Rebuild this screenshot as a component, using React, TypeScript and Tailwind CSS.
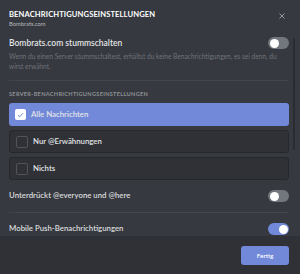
import React, { useState } from 'react';

const font = { fontFamily: 'Lato, "Open Sans", sans-serif' };

const Toggle: React.FC<{ on: boolean; onClick: () => void }> = ({ on, onClick }) => (
    <button
        type="button"
        onClick={onClick}
        className={`relative w-[21px] h-[12px] rounded-full shrink-0 ${on ? 'bg-[#7289da]' : 'bg-[#72767d]'}`}
    >
        <span
            className={`absolute top-[1.5px] w-[9px] h-[9px] rounded-full bg-white ${on ? 'right-[1.5px]' : 'left-[1.5px]'}`}
        />
    </button>
);

const options = ['Alle Nachrichten', 'Nur @Erwähnungen', 'Nichts'];

const App: React.FC = () => {
    const [muted, setMuted] = useState(false);
    const [level, setLevel] = useState(0);
    const [suppress, setSuppress] = useState(false);
    const [push, setPush] = useState(true);

    return (
        <div style={font} className="relative w-[300px] h-[274px] bg-[#36393f] flex flex-col overflow-hidden">
            {/* scrollbar */}
            <div className="absolute right-[5px] top-[38px] w-[2px] h-[112px] rounded-full bg-[#2a2c31]" />

            <div className="flex-1 px-[9px] pr-[11px] overflow-hidden">
                <div className="pt-[10px] h-[34px] relative">
                    <div className="text-[7.6px] leading-[9px] font-bold text-white tracking-[0.1px]">BENACHRICHTIGUNGSEINSTELLUNGEN</div>
                    <div className="text-[5.8px] leading-[8px] text-[#b9bbbe] mt-[1px]">Bombrats.com</div>
                    <button className="absolute right-[4px] top-[13px] text-[#a0a3a8]">
                        <svg width="6" height="6" viewBox="0 0 6 6">
                            <path d="M0.5 0.5 L5.5 5.5 M5.5 0.5 L0.5 5.5" stroke="currentColor" strokeWidth="0.9" />
                        </svg>
                    </button>
                </div>

                <div className="mt-[2px] h-[14px] flex items-center justify-between">
                    <span className="text-[8.5px] font-semibold text-[#e3e4e6]">Bombrats.com stummschalten</span>
                    <Toggle on={muted} onClick={() => setMuted(!muted)} />
                </div>
                <p className="mt-[1px] text-[6.6px] leading-[10px] text-[#6f737a]">
                    Wenn du einen Server stummschaltest, erhältst du keine Benachrichtigungen, es sei denn, du wirst erwähnt.
                </p>

                <div className="mt-[9px] h-px bg-[#42454a]" />

                <div className="mt-[8px] h-[11px] flex items-center text-[5.6px] font-bold tracking-[0.3px] text-[#8e9297]">
                    SERVER-BENACHRICHTIGUNGSEINSTELLUNGEN
                </div>

                <div className="mt-[3px] flex flex-col gap-[4px]">
                    {options.map((opt, i) => {
                        const active = level === i;
                        return (
                            <button
                                key={opt}
                                type="button"
                                onClick={() => setLevel(i)}
                                className={`h-[23px] rounded-[3px] flex items-center pl-[6px] gap-[5px] ${active ? 'bg-[#7289da]' : 'bg-[#2f3136] border border-[#26282c] pl-[5px]'}`}
                            >
                                {active ? (
                                    <span className="w-[11px] h-[11px] rounded-[2px] bg-white flex items-center justify-center">
                                        <svg width="7" height="6" viewBox="0 0 7 6">
                                            <path d="M1 3.2 L2.7 4.8 L6 1.2" fill="none" stroke="#7289da" strokeWidth="1" />
                                        </svg>
                                    </span>
                                ) : (
                                    <span className="w-[12px] h-[12px] rounded-[2px] border border-[#4f535a]" />
                                )}
                                <span className="text-[7.8px] font-semibold text-[#e3e4e6]">{opt}</span>
                            </button>
                        );
                    })}
                </div>

                <div className="mt-[9px] h-[14px] flex items-center justify-between">
                    <span className="text-[7.8px] font-semibold text-[#dcddde]">Unterdrückt @everyone und @here</span>
                    <Toggle on={suppress} onClick={() => setSuppress(!suppress)} />
                </div>

                <div className="mt-[9px] h-px bg-[#42454a]" />

                <div className="mt-[9px] h-[14px] flex items-center justify-between">
                    <span className="text-[7.8px] font-semibold text-[#dcddde]">Mobile Push-Benachrichtigungen</span>
                    <Toggle on={push} onClick={() => setPush(!push)} />
                </div>
            </div>

            <div className="h-[38px] shrink-0 bg-[#2f3136] flex items-start justify-end pr-[11px] pt-[10px]">
                <button className="w-[48px] h-[19px] rounded-[3px] bg-[#7289da] text-white text-[6.4px] font-semibold">
                    Fertig
                </button>
            </div>
        </div>
    );
};

export default App;
